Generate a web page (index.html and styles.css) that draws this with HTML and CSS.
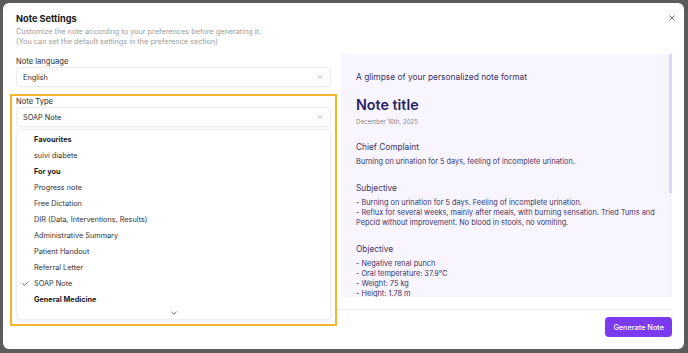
FILE: index.html
```html
<!DOCTYPE html>
<html lang="en">
<head>
    <meta charset="UTF-8">
    <meta name="viewport" content="width=device-width, initial-scale=1.0">
    <title>Note Settings</title>
    <link rel="stylesheet" href="styles.css">
</head>
<body>
    <div class="modal">
        <div class="modal-top">
            <h1 class="modal-title">Note Settings</h1>
            <button class="close" type="button" aria-label="Close">
                <svg width="6" height="6" viewBox="0 0 6 6"><path d="M0.5 0.5L5.5 5.5M5.5 0.5L0.5 5.5" stroke="#7a7a7a" stroke-width="1"/></svg>
            </button>
        </div>
        <p class="modal-sub">Customize the note according to your preferences before generating it.<br>(You can set the default settings in the preference section)</p>

        <div class="modal-body">
            <div class="settings">
                <div class="lang-field">
                    <div class="field-label">Note language</div>
                    <div class="select">
                        <span>English</span>
                        <svg class="chev" width="6" height="4" viewBox="0 0 6 4"><polyline points="0.5,0.8 3,3.2 5.5,0.8" fill="none" stroke="#9a9a9a" stroke-width="0.8"/></svg>
                    </div>
                </div>

                <div class="highlight">
                    <div class="field-label">Note Type</div>
                    <div class="select">
                        <span>SOAP Note</span>
                        <svg class="chev" width="6" height="4" viewBox="0 0 6 4"><polyline points="0.5,0.8 3,3.2 5.5,0.8" fill="none" stroke="#9a9a9a" stroke-width="0.8"/></svg>
                    </div>
                    <ul class="menu">
                        <li class="menu-item group"><span class="check"></span>Favourites</li>
                        <li class="menu-item"><span class="check"></span>suivi diabète</li>
                        <li class="menu-item group"><span class="check"></span>For you</li>
                        <li class="menu-item"><span class="check"></span>Progress note</li>
                        <li class="menu-item"><span class="check"></span>Free Dictation</li>
                        <li class="menu-item"><span class="check"></span>DIR (Data, Interventions, Results)</li>
                        <li class="menu-item"><span class="check"></span>Administrative Summary</li>
                        <li class="menu-item"><span class="check"></span>Patient Handout</li>
                        <li class="menu-item"><span class="check"></span>Referral Letter</li>
                        <li class="menu-item"><span class="check"><svg width="7" height="5" viewBox="0 0 7 5"><polyline points="0.5,2.6 2.4,4.4 6.5,0.5" fill="none" stroke="#555" stroke-width="0.8"/></svg></span>SOAP Note</li>
                        <li class="menu-item group"><span class="check"></span>General Medicine</li>
                        <li class="menu-more">
                            <svg width="6" height="4" viewBox="0 0 6 4"><polyline points="0.5,0.8 3,3.2 5.5,0.8" fill="none" stroke="#444" stroke-width="0.8"/></svg>
                        </li>
                    </ul>
                </div>
            </div>

            <div class="preview-wrap">
                <div class="preview">
                    <p class="glimpse">A glimpse of your personalized note format</p>
                    <h2 class="note-title">Note title</h2>
                    <p class="note-date">December 16th, 2025</p>

                    <h3 class="sec-head">Chief Complaint</h3>
                    <p class="sec-body">Burning on urination for 5 days, feeling of incomplete urination.</p>

                    <h3 class="sec-head">Subjective</h3>
                    <p class="sec-body">- Burning on urination for 5 days. Feeling of incomplete urination.<br>- Reflux for several weeks, mainly after meals, with burning sensation. Tried Tums and<br>Pepcid without improvement. No blood in stools, no vomiting.</p>

                    <h3 class="sec-head">Objective</h3>
                    <p class="sec-body">- Negative renal punch<br>- Oral temperature: 37.9°C<br>- Weight: 75 kg<br>- Height: 1.78 m</p>
                </div>
                <div class="scroll-track"><div class="scroll-thumb"></div></div>
            </div>
        </div>

        <div class="modal-foot">
            <button class="btn-generate" type="button">Generate Note</button>
        </div>
    </div>
</body>
</html>
```

FILE: styles.css
```css
* {
    box-sizing: border-box;
    margin: 0;
    padding: 0;
}

body {
    font-family: Inter, "Open Sans", sans-serif;
    background-color: #5b5b5b;
    padding: 3px 4px 4px 3px;
    height: 353px;
    overflow: hidden;
}

.modal {
    width: 681px;
    height: 346px;
    background-color: #fff;
    border-radius: 6px;
    padding: 8px 12px 0 13px;
    display: flex;
    flex-direction: column;
}

.modal-top {
    display: flex;
    justify-content: space-between;
    align-items: flex-start;
}

.modal-title {
    font-size: 9.2px;
    font-weight: 700;
    line-height: 16px;
    color: #1a1a1a;
}

.close {
    border: none;
    background: none;
    margin: 4px -3px 0 0;
    width: 6px;
    height: 6px;
    display: flex;
}

.modal-sub {
    font-size: 7.3px;
    line-height: 10px;
    color: #9c9c9c;
}

.modal-body {
    display: grid;
    grid-template-columns: 315px 331px;
    column-gap: 10px;
    height: 243px;
    margin-top: 7px;
}

.settings {
    position: relative;
    z-index: 1;
}

.lang-field {
    padding-top: 2px;
}

.field-label {
    font-size: 7.6px;
    line-height: 11px;
    color: #2b2b2b;
}

.select {
    height: 20px;
    border: 1px solid #ececec;
    border-radius: 4px;
    padding: 0 7px 0 6px;
    display: flex;
    align-items: center;
    justify-content: space-between;
    font-size: 7.3px;
    color: #2b2b2b;
    background-color: #fff;
    box-shadow: 0 1px 2px rgba(0, 0, 0, 0.04);
}

.highlight {
    margin: 7px -6px 0;
    border: 2px solid #f4b52e;
    padding: 0 4px 4px;
    background-color: #fff;
}

.menu {
    list-style: none;
    margin-top: 2px;
    border: 1px solid #efefef;
    border-radius: 4px;
    padding-top: 1px;
    box-shadow: 0 1px 3px rgba(0, 0, 0, 0.08);
    background-color: #fff;
}

.menu-item {
    height: 16px;
    display: flex;
    align-items: center;
    padding-left: 5px;
    font-size: 7.3px;
    color: #333;
}

.menu-item.group {
    font-weight: 700;
    color: #1c1c1c;
}

.check {
    width: 12px;
    display: flex;
    align-items: center;
}

.menu-more {
    height: 12px;
    display: flex;
    justify-content: center;
    align-items: center;
}

.preview-wrap {
    display: grid;
    grid-template-columns: 328px 3px;
    height: 243px;
}

.preview {
    background-color: #f9f5fe;
    padding: 17px 8px 0 15px;
    overflow: hidden;
    color: #3a3366;
}

.scroll-track {
    background-color: #f6f3fc;
}

.scroll-thumb {
    height: 139px;
    background-color: #dcd5f5;
}

.glimpse {
    font-size: 8.4px;
    line-height: 12px;
}

.note-title {
    font-size: 14.3px;
    font-weight: 600;
    line-height: 18px;
    margin-top: 13px;
    color: #291f5e;
}

.note-date {
    font-size: 6.1px;
    line-height: 8px;
    margin-top: 4px;
    color: #8b8b8b;
}

.sec-head {
    font-size: 8.3px;
    font-weight: 400;
    line-height: 12px;
    margin-top: 15px;
}

.sec-body {
    font-size: 7.35px;
    line-height: 10px;
    margin-top: 4px;
    white-space: nowrap;
}

.modal-foot {
    margin-top: 12px;
    border-top: 1px solid #ececec;
    display: flex;
    justify-content: flex-end;
    padding-top: 7px;
}

.btn-generate {
    height: 20px;
    padding: 0 8px;
    border: none;
    border-radius: 4px;
    background-color: #7b3aed;
    color: #fff;
    font-family: inherit;
    font-size: 7.3px;
    font-weight: 500;
}
```
